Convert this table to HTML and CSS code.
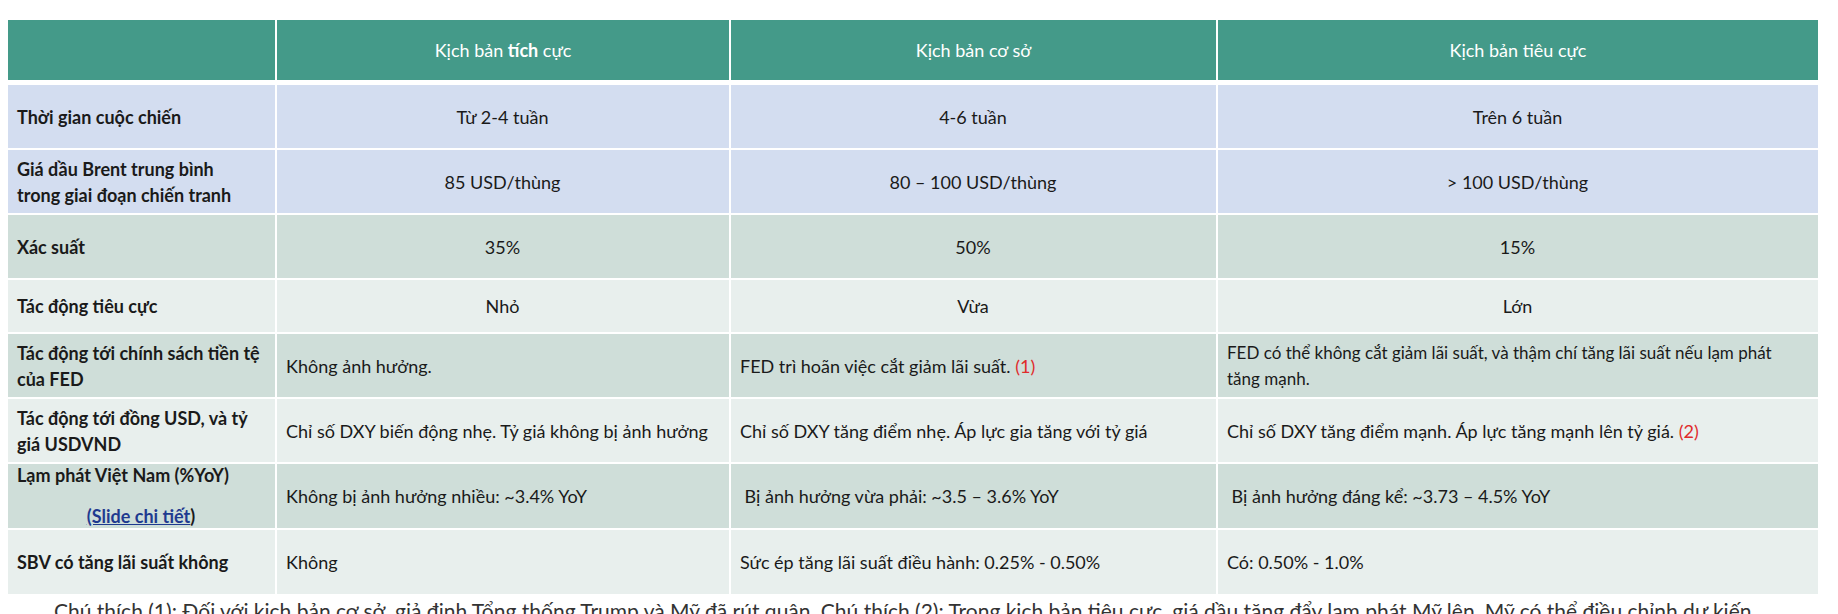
FILE: index.html
```html
<!DOCTYPE html>
<html lang="vi">
<head>
<meta charset="utf-8">
<title>Kịch bản</title>
<link rel="stylesheet" href="styles.css">
</head>
<body>
<table class="scen">
  <colgroup>
    <col class="c1"><col class="c2"><col class="c3"><col class="c4">
  </colgroup>
  <thead>
    <tr class="head">
      <th></th>
      <th>Kịch bản <b>tích</b> cực</th>
      <th>Kịch bản cơ sở</th>
      <th>Kịch bản tiêu cực</th>
    </tr>
  </thead>
  <tbody>
    <tr class="blue h63">
      <td class="lbl">Thời gian cuộc chiến</td>
      <td class="ctr">Từ 2-4 tuần</td>
      <td class="ctr">4-6 tuần</td>
      <td class="ctr">Trên 6 tuần</td>
    </tr>
    <tr class="blue h63">
      <td class="lbl">Giá dầu Brent trung bình<br>trong giai đoạn chiến tranh</td>
      <td class="ctr">85 USD/thùng</td>
      <td class="ctr">80 – 100 USD/thùng</td>
      <td class="ctr">&gt; 100 USD/thùng</td>
    </tr>
    <tr class="dark h63">
      <td class="lbl">Xác suất</td>
      <td class="ctr">35%</td>
      <td class="ctr">50%</td>
      <td class="ctr">15%</td>
    </tr>
    <tr class="light h52">
      <td class="lbl">Tác động tiêu cực</td>
      <td class="ctr">Nhỏ</td>
      <td class="ctr">Vừa</td>
      <td class="ctr">Lớn</td>
    </tr>
    <tr class="dark h63">
      <td class="lbl">Tác động tới chính sách tiền tệ<br>của FED</td>
      <td>Không ảnh hưởng.</td>
      <td>FED trì hoãn việc cắt giảm lãi suất. <span class="red">(1)</span></td>
      <td class="wide">FED có thể không cắt giảm lãi suất, và thậm chí tăng lãi suất nếu lạm phát<br>tăng mạnh.</td>
    </tr>
    <tr class="light h63">
      <td class="lbl">Tác động tới đồng USD, và tỷ<br>giá USDVND</td>
      <td>Chỉ số DXY biến động nhẹ. Tỷ giá không bị ảnh hưởng</td>
      <td>Chỉ số DXY tăng điểm nhẹ. Áp lực gia tăng với tỷ giá</td>
      <td>Chỉ số DXY tăng điểm mạnh. Áp lực tăng mạnh lên tỷ giá. <span class="red">(2)</span></td>
    </tr>
    <tr class="dark h63">
      <td class="lbl top">Lạm phát Việt Nam (%YoY)<span class="link"><u>(Slide chi tiết</u>)</span></td>
      <td>Không bị ảnh hưởng nhiều: ~3.4% YoY</td>
      <td>&nbsp;Bị ảnh hưởng vừa phải: ~3.5 – 3.6% YoY</td>
      <td>&nbsp;Bị ảnh hưởng đáng kể: ~3.73 – 4.5% YoY</td>
    </tr>
    <tr class="light h63">
      <td class="lbl">SBV có tăng lãi suất không</td>
      <td>Không</td>
      <td>Sức ép tăng lãi suất điều hành: 0.25% - 0.50%</td>
      <td>Có: 0.50% - 1.0%</td>
    </tr>
  </tbody>
</table>
<p class="note">Chú thích (1): Đối với kịch bản cơ sở, giả định Tổng thống Trump và Mỹ đã rút quân. Chú thích (2): Trong kịch bản tiêu cực, giá dầu tăng đẩy lạm phát Mỹ lên, Mỹ có thể điều chỉnh dự kiến.</p>
</body>
</html>
```

FILE: styles.css
```css
html, body {
  margin: 0;
  padding: 0;
  background: #ffffff;
}
body {
  font-family: "Lato", "Noto Sans", sans-serif;
  color: #1a1a1a;
  overflow: hidden;
  height: 614px;
}
.scen {
  margin: 20px 0 0 8px;
  width: 1810px;
  border-collapse: collapse;
  table-layout: fixed;
  font-size: 18px;
}
.c1 { width: 268px; }
.c2 { width: 454px; }
.c3 { width: 487px; }
.c4 { width: 601px; }
.scen th,
.scen td {
  border: 2px solid #ffffff;
  padding: 0 10px 0 9px;
  text-align: left;
  vertical-align: middle;
  line-height: 26px;
}
.scen tr > :first-child { border-left: none; }
.scen tr > :last-child { border-right: none; }
.scen thead th {
  background: #449a89;
  color: #ffffff;
  font-weight: 400;
  text-align: center;
  height: 60px;
  padding: 0 10px;
  border-top: none;
  border-bottom: 5px solid #ffffff;
}
.scen thead th b { font-weight: 700; }
.blue td { background: #d3ddf0; }
.dark td { background: #cfded9; }
.light td { background: #e8efed; }
.h52 td { height: 52px; }
.h63 td { height: 63px; }
.scen tbody tr:last-child td { border-bottom: none; height: 64px; }
.lbl {
  font-weight: 700;
  white-space: nowrap;
}
.lbl.top {
  vertical-align: top;
  line-height: 20px;
  padding-top: 1px;
}
.ctr { text-align: center !important; }
.wide {
  font-size: 17px;
  white-space: nowrap;
  padding-right: 4px !important;
}
.red { color: #e02b2b; }
.link {
  display: block;
  text-align: center;
  margin-top: 20px;
  line-height: 22px;
  color: #1a1a1a;
}
.link u {
  color: #1f3a8f;
  text-decoration: underline;
}
.note {
  margin: 2px 0 0 54px;
  font-size: 21px;
  line-height: 30px;
  color: #333333;
  white-space: nowrap;
}
```
